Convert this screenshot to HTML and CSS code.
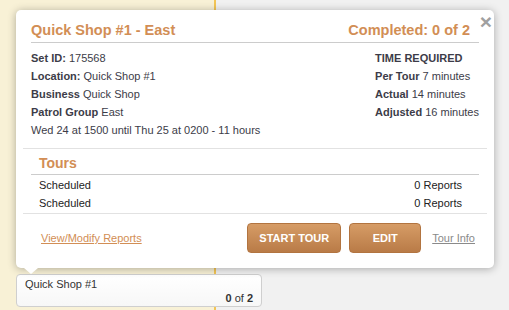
FILE: index.html
```html
<!DOCTYPE html>
<html lang="en">

<head>
    <meta charset="UTF-8">
    <meta name="viewport" content="width=device-width, initial-scale=1.0">
    <title>Patrol Schedule</title>
    <link rel="stylesheet" href="styles.css">
</head>

<body>
    <div class="calendar">
        <div class="day-col">
            <!-- Evento no calendário -->
            <div class="event-card">
                <div class="event-name">Quick Shop #1</div>
                <div class="event-count"><b>0</b> of <b>2</b></div>
            </div>
        </div>
        <div class="rest-col"></div>
    </div>

    <!-- Popup de detalhes -->
    <div class="popup">
        <span class="close">&times;</span>

        <div class="popup-head">
            <h2>Quick Shop #1 - East</h2>
            <h2>Completed: 0 of 2</h2>
        </div>

        <div class="info">
            <div class="info-left">
                <div><b>Set ID:</b> 175568</div>
                <div><b>Location:</b> Quick Shop #1</div>
                <div><b>Business</b> Quick Shop</div>
                <div><b>Patrol Group</b> East</div>
                <div>Wed 24 at 1500 until Thu 25 at 0200 - 11 hours</div>
            </div>
            <div class="info-right">
                <div><b>TIME REQUIRED</b></div>
                <div><b>Per Tour</b> 7 minutes</div>
                <div><b>Actual</b> 14 minutes</div>
                <div><b>Adjusted</b> 16 minutes</div>
            </div>
        </div>

        <div class="tours">
            <h3>Tours</h3>
            <div class="tour-row"><span>Scheduled</span><span>0 Reports</span></div>
            <div class="tour-row"><span>Scheduled</span><span>0 Reports</span></div>
        </div>

        <div class="popup-foot">
            <a href="#" class="link-reports">View/Modify Reports</a>
            <button class="btn btn-start">START TOUR</button>
            <button class="btn">EDIT</button>
            <a href="#" class="link-info">Tour Info</a>
        </div>
    </div>
</body>

</html>
```

FILE: styles.css
```css
body {
    margin: 0;
    font-family: "Liberation Sans", Arial, sans-serif;
    font-size: 11px;
    color: #3c3c48;
    position: relative;
    overflow: hidden;
}

.calendar {
    display: flex;
    height: 310px;
}

.day-col {
    width: 216px;
    background-color: #f8f1d6; /* Fundo amarelo claro */
    border-right: 2px solid #f3c555;
    padding-top: 274px;
    box-sizing: border-box;
}

.rest-col {
    flex: 1;
    background-color: #f1f1f1;
}

.event-card {
    position: relative;
    z-index: 1;
    margin-left: 16px;
    width: 246px;
    height: 33px;
    box-sizing: border-box;
    padding: 2px 8px 0 8px;
    background: linear-gradient(#ffffff, #f7f7f7);
    border: 1px solid #cfcfcf;
    border-radius: 4px;
    color: #333;
    line-height: 14px;
}

.event-count {
    text-align: right;
}

.popup {
    position: absolute;
    top: 10px;
    left: 16px;
    z-index: 2;
    width: 478px;
    height: 258px;
    box-sizing: border-box;
    padding: 0 7px;
    background-color: #fff;
    border-radius: 5px;
    box-shadow: 0 1px 8px rgba(0, 0, 0, 0.3);
}

/* Seta apontando para o evento */
.popup::after {
    content: "";
    position: absolute;
    left: 8px;
    bottom: -6px;
    width: 0;
    height: 0;
    border-left: 7px solid transparent;
    border-right: 7px solid transparent;
    border-top: 6px solid #fff;
}

.close {
    position: absolute;
    top: 2px;
    right: 2px;
    font-size: 21px;
    font-weight: bold;
    color: #a0a0a0;
    line-height: 20px;
    cursor: pointer;
}

.popup-head {
    display: flex;
    justify-content: space-between;
    margin: 0 8px;
    padding: 9px 9px 1px 0;
    border-bottom: 1px solid #cccccc;
}

h2 {
    margin: 0;
    font-size: 14.5px;
    line-height: 22px;
    color: #d28e55; /* Laranja */
}

.info {
    display: flex;
    justify-content: space-between;
    padding: 6px 8px 9px 8px;
    border-bottom: 1px solid #e2e2e2;
    line-height: 18px;
}

.tours {
    padding: 3px 0 1px 0;
    border-bottom: 1px solid #e2e2e2;
}

h3 {
    margin: 0 8px 1px 8px;
    padding-left: 8px;
    font-size: 14px;
    line-height: 22px;
    color: #d28e55;
    border-bottom: 1px solid #cccccc;
}

.tour-row {
    display: flex;
    justify-content: space-between;
    padding: 0 25px 0 16px;
    line-height: 18px;
    color: #222;
}

.popup-foot {
    display: flex;
    align-items: center;
    gap: 8px;
    padding: 9px 12px 0 18px;
}

.popup-foot a {
    text-decoration: underline;
}

.link-reports {
    color: #d28e55;
    margin-right: auto;
}

.link-info {
    color: #8a8a8a;
    margin-left: 3px;
}

.btn {
    height: 30px;
    min-width: 72px;
    padding: 0 11px;
    background: linear-gradient(#d69c66, #b97b47);
    border: 1px solid #b27440;
    border-radius: 4px;
    color: #fff;
    font-family: "Liberation Sans", Arial, sans-serif;
    font-size: 11px;
    font-weight: bold;
    cursor: pointer;
}

.btn:hover {
    background: linear-gradient(#dba26d, #be8150);
}
```
